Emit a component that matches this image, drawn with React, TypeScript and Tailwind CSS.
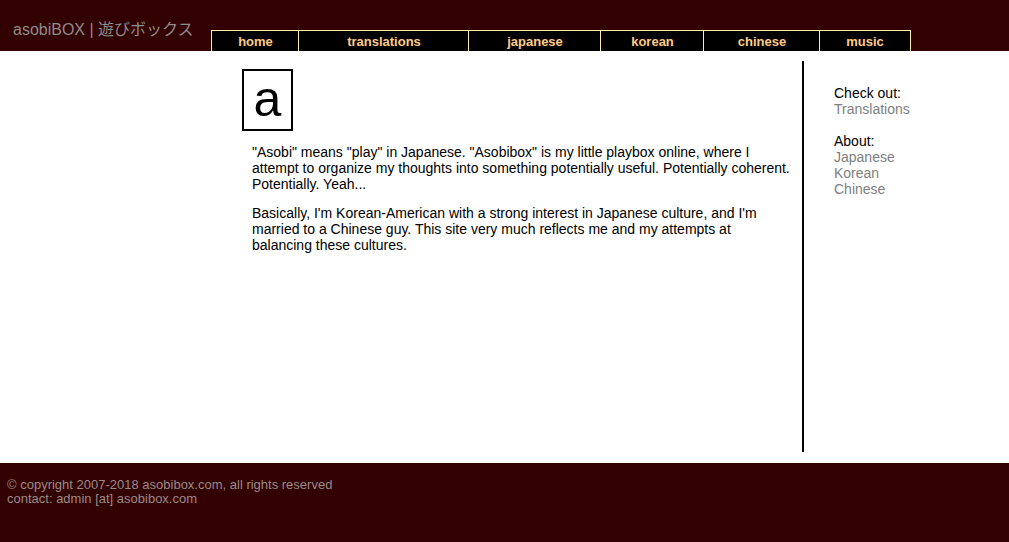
import React from "react";

const tabs: { label: string; w: string }[] = [
  { label: "home", w: "w-[88px]" },
  { label: "translations", w: "w-[171px]" },
  { label: "japanese", w: "w-[133px]" },
  { label: "korean", w: "w-[104px]" },
  { label: "chinese", w: "w-[117px]" },
  { label: "music", w: "w-[92px]" },
];

export default function App() {
  return (
    <div className="min-h-[542px] w-full flex flex-col font-['Liberation_Sans','Noto_Sans_CJK_JP',sans-serif]">
      <header className="h-[51px] bg-[#330000] flex items-end">
        <div className="w-[211px] h-[51px] pl-[13px] pt-[19px] text-[16px] leading-[22px] text-[#8c8c8c] font-['Liberation_Sans','Noto_Sans_CJK_JP',sans-serif]">
          asobiBOX | 遊びボックス
        </div>
        <nav className="flex h-[21px]">
          {tabs.map((t, i) => (
            <div
              key={t.label}
              className={`${t.w} h-[21px] bg-black border-t border-l border-[#ffeeaa] ${
                i === tabs.length - 1 ? "border-r" : ""
              } ${i > 0 ? "-ml-px" : ""} flex items-center justify-center text-[13px] font-bold text-[#ffcc88] pt-px`}
            >
              {t.label}
            </div>
          ))}
        </nav>
      </header>

      <main className="flex-1 bg-white flex pt-[10px] pb-[11px]">
        <div className="w-[242px] shrink-0" />
        <div className="w-[562px] h-[391px] shrink-0 border-r-2 border-black pt-[8px]">
          <div className="w-[51px] h-[62px] border-2 border-black flex items-center justify-center">
            <span className="text-[50px] leading-none text-black -mt-[2px]">a</span>
          </div>
          <div className="pl-[10px] w-[550px] text-[14px] leading-[16px] text-black">
            <p className="mt-[13px]">
              "Asobi" means "play" in Japanese. "Asobibox" is my little playbox online, where I attempt to organize my
              thoughts into something potentially useful. Potentially coherent. Potentially. Yeah...
            </p>
            <p className="mt-[13px]">
              Basically, I'm Korean-American with a strong interest in Japanese culture, and I'm married to a Chinese
              guy. This site very much reflects me and my attempts at balancing these cultures.
            </p>
          </div>
        </div>
        <aside className="pl-[30px] pt-[24px] text-[14px] leading-[16px]">
          <div className="text-black">Check out:</div>
          <div className="text-[#808080]">Translations</div>
          <div className="h-[16px]" />
          <div className="text-black">About:</div>
          <div className="text-[#808080]">Japanese</div>
          <div className="text-[#808080]">Korean</div>
          <div className="text-[#808080]">Chinese</div>
        </aside>
      </main>

      <footer className="h-[79px] bg-[#330000] pl-[7px] pt-[15px] text-[13px] leading-[14px] text-[#9a8a8a]">
        <div>© copyright 2007-2018 asobibox.com, all rights reserved</div>
        <div>contact: admin [at] asobibox.com</div>
      </footer>
    </div>
  );
}
